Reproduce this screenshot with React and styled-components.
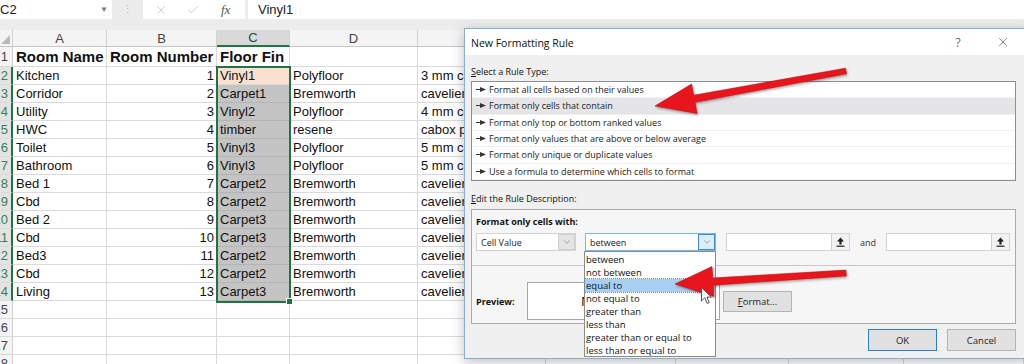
import React from "react";
import styled, { createGlobalStyle } from "styled-components";
import { X, Check, ChevronDown } from "lucide-react";

const GlobalStyle = createGlobalStyle`
  html, body {
    margin: 0;
    padding: 0;
    background: #fff;
    overflow: hidden;
  }
  body {
    font-family: "Liberation Sans", Arial, sans-serif;
    color: #111;
  }
`;

const COLS = "13px 94px 110px 73px 128px 128px 130px 113px 115px 120px";

const Screen = styled.div`
  position: relative;
  width: 1024px;
  height: 364px;
  overflow: hidden;
  background: #fff;
`;

/* ---------- formula bar ---------- */

const TopArea = styled.div`
  background: #ececec;
  padding-bottom: 11px;
`;

const FormulaBar = styled.div`
  display: flex;
  height: 19px;
  font-size: 13px;
`;

const NameBox = styled.div`
  width: 112px;
  background: #fff;
  display: flex;
  align-items: center;
  justify-content: space-between;
  padding: 0 4px 0 0;
  box-sizing: border-box;
  color: #222;
`;

const Caret = styled.span`
  font-size: 8px;
  color: #777;
`;

const Grip = styled.div`
  width: 31px;
  display: flex;
  align-items: center;
  justify-content: center;
  color: #b4b4b4;
  font-size: 11px;
`;

const FxArea = styled.div`
  width: 102px;
  background: #fff;
  display: flex;
  align-items: center;
  padding-left: 11px;
  gap: 18px;
  box-sizing: border-box;
  color: #b8b8b8;
`;

const FxMark = styled.span`
  font-family: "Liberation Serif", serif;
  font-style: italic;
  font-size: 13px;
  color: #555;
  margin-left: 3px;
`;

const FormulaInput = styled.div`
  flex: 1;
  margin-left: 3px;
  background: #fff;
  display: flex;
  align-items: center;
  padding-left: 10px;
  color: #222;
`;

/* ---------- sheet ---------- */

const Row = styled.div`
  display: grid;
  grid-template-columns: ${COLS};
  height: ${(p) => p.$h}px;
`;

const Corner = styled.div`
  position: relative;
  background: #f4f4f4;
  border-right: 1px solid #d0d0d0;
  border-bottom: 1px solid #c6c6c6;
  &::after {
    content: "";
    position: absolute;
    right: 2px;
    bottom: 2px;
    border-left: 9px solid transparent;
    border-bottom: 9px solid #b9b9b9;
  }
`;

const ColHead = styled.div`
  display: flex;
  align-items: center;
  justify-content: center;
  box-sizing: border-box;
  background: ${(p) => (p.$sel ? "#d9d9d9" : "#f4f4f4")};
  border-right: 1px solid #d2d2d2;
  border-bottom: ${(p) => (p.$sel ? "2px solid #217346" : "1px solid #c6c6c6")};
  color: ${(p) => (p.$sel ? "#1e4f33" : "#444")};
  font-size: 13px;
`;

const RowHead = styled.div`
  display: flex;
  align-items: center;
  justify-content: flex-end;
  overflow: hidden;
  box-sizing: border-box;
  padding-right: ${(p) => (p.$sel ? "3px" : "4px")};
  background: ${(p) => (p.$sel ? "#e3e3e3" : "#f4f4f4")};
  color: ${(p) => (p.$sel ? "#3d7d58" : "#444")};
  border-right: ${(p) => (p.$sel ? "2px solid #217346" : "1px solid #d0d0d0")};
  border-bottom: 1px solid #dadada;
  font-size: 13px;
`;

const Cell = styled.div`
  display: flex;
  align-items: center;
  justify-content: ${(p) => (p.$num ? "flex-end" : "flex-start")};
  padding: ${(p) => (p.$num ? "0 2px 0 0" : "0 0 0 3px")};
  box-sizing: border-box;
  border-right: 1px solid ${(p) => (p.$shade ? "#b4b4b4" : "#dadada")};
  border-bottom: 1px solid ${(p) => (p.$shade ? "#b4b4b4" : "#dadada")};
  background: ${(p) => p.$bg || "#fff"};
  white-space: nowrap;
  overflow: hidden;
  font-size: ${(p) => (p.$bold ? "15px" : "13px")};
  font-weight: ${(p) => (p.$bold ? 700 : 400)};
  color: #111;
`;

const Selection = styled.div`
  position: absolute;
  left: 216px;
  top: 66px;
  width: 75px;
  height: 237px;
  box-sizing: border-box;
  border: 2px solid #217346;
  pointer-events: none;
  &::after {
    content: "";
    position: absolute;
    right: -4px;
    bottom: -4px;
    width: 5px;
    height: 5px;
    background: #217346;
    border: 1px solid #fff;
  }
`;

/* ---------- dialog ---------- */

const Dialog = styled.div`
  position: absolute;
  left: 464px;
  top: 28px;
  width: 566px;
  height: 331px;
  box-sizing: border-box;
  background: #f0f0f0;
  border: 1px solid #86add4;
  box-shadow: 0 3px 12px rgba(0, 0, 0, 0.25);
  font-family: "Open Sans", "Liberation Sans", sans-serif;
  font-size: 9px;
  color: #111;
`;

const TitleBar = styled.div`
  display: flex;
  align-items: center;
  height: 26px;
  background: #fff;
  padding: 0 6px;
  font-size: 10.5px;
`;

const TitleText = styled.div`
  flex: 1;
  padding-top: 2px;
`;

const TitleBtn = styled.div`
  width: ${(p) => p.$w}px;
  margin-left: ${(p) => p.$gap || 0}px;
  display: flex;
  justify-content: center;
  color: #666;
  font-size: 12px;
`;

const Body = styled.div`
  padding: 0 0 0 6px;
  display: flex;
  flex-direction: column;
`;

const Label = styled.div`
  height: 14px;
  line-height: 14px;
  margin-top: ${(p) => p.$mt}px;
  font-weight: ${(p) => (p.$bold ? 700 : 400)};
  &::first-letter {
    text-decoration: ${(p) => (p.$key ? "underline" : "none")};
  }
`;

const RuleList = styled.div`
  width: 545px;
  height: 100px;
  margin-top: 2px;
  box-sizing: border-box;
  background: #fff;
  border: 1px solid #8a8f96;
  display: flex;
  flex-direction: column;
`;

const RuleItem = styled.div`
  flex: 1;
  display: flex;
  align-items: center;
  gap: 3px;
  padding-left: 4px;
  background: ${(p) => (p.$sel ? "#e5e5e8" : "#fff")};
  border-bottom: 1px solid #f1f1f1;
  color: #222;
  white-space: nowrap;
`;

const DescBox = styled.div`
  width: 545px;
  height: 115px;
  margin-top: 3px;
  box-sizing: border-box;
  border: 1px solid #a9a9a9;
  background: #f6f6f6;
  display: flex;
  flex-direction: column;
`;

const DescTop = styled.div`
  padding: 5px 0 0 4px;
  height: 56px;
  box-sizing: border-box;
  border-bottom: 1px solid #c8c8c8;
`;

const FieldRow = styled.div`
  display: flex;
  align-items: center;
  margin-top: 4px;
  height: 18px;
`;

const Combo = styled.div`
  width: ${(p) => p.$w}px;
  height: 18px;
  margin-right: ${(p) => p.$mr || 0}px;
  box-sizing: border-box;
  border: 1px solid ${(p) => (p.$open ? "#7eb4ea" : "#d3d3d3")};
  background: #fff;
  display: flex;
  align-items: center;
`;

const ComboText = styled.div`
  flex: 1;
  padding-left: 4px;
  color: #222;
`;

const ComboBtn = styled.div`
  width: 17px;
  height: 100%;
  box-sizing: border-box;
  display: flex;
  align-items: center;
  justify-content: center;
  background: ${(p) => (p.$open ? "#dceefc" : "#e4e4e4")};
  border: 1px solid ${(p) => (p.$open ? "#3c8ad8" : "#cfcfcf")};
  color: #555;
`;

const RefBtn = styled.div`
  width: 18px;
  height: 100%;
  box-sizing: border-box;
  display: flex;
  align-items: center;
  justify-content: center;
  background: #f2f2f2;
  border-left: 1px solid #d0d0d0;
`;

const AndText = styled.div`
  width: 26px;
  margin-left: 10px;
  color: #333;
`;

const PreviewRow = styled.div`
  display: flex;
  align-items: center;
  padding: 16px 0 0 4px;
`;

const PreviewLabel = styled.div`
  width: 51px;
  font-weight: 700;
`;

const PreviewBox = styled.div`
  width: 193px;
  height: 38px;
  box-sizing: border-box;
  background: #fff;
  border: 1px solid #a6a6a6;
  display: flex;
  align-items: center;
  justify-content: center;
  font-family: "Liberation Sans", Arial, sans-serif;
  font-size: 13px;
  color: #111;
`;

const Button = styled.div`
  width: 69px;
  height: ${(p) => p.$h || 22}px;
  margin-left: ${(p) => p.$ml || 0}px;
  box-sizing: border-box;
  display: flex;
  align-items: center;
  justify-content: center;
  background: #e1e1e1;
  border: 1px solid ${(p) => (p.$primary ? "#2a7fd4" : "#b4b4b4")};
  color: #222;
  font-size: 9.5px;
`;

const KeyText = styled.span`
  &::first-letter {
    text-decoration: underline;
  }
`;

const ButtonRow = styled.div`
  display: flex;
  justify-content: flex-end;
  width: 545px;
  margin-top: 5px;
`;

const DropList = styled.div`
  position: absolute;
  left: 119px;
  top: 222px;
  width: 132px;
  height: 106px;
  box-sizing: border-box;
  background: #fff;
  border: 1px solid #8c8c8c;
  display: flex;
  flex-direction: column;
  padding: 1px 0;
`;

const DropItem = styled.div`
  flex: 1;
  display: flex;
  align-items: center;
  padding-left: 1px;
  font-size: 9.5px;
  color: #111;
  white-space: nowrap;
  background: ${(p) => (p.$hot ? "#a8cff1" : "transparent")};
  outline: ${(p) => (p.$hot ? "1px dotted #5a8fc4" : "none")};
`;

const Overlay = styled.svg`
  position: absolute;
  left: 0;
  top: 0;
  pointer-events: none;
`;

const Cursor = styled.svg`
  position: absolute;
  left: 701px;
  top: 287px;
`;

/* ---------- data ---------- */

const rows = [
  ["Kitchen", 1, "Vinyl1", "Polyfloor", "3 mm commercial"],
  ["Corridor", 2, "Carpet1", "Bremworth", "cavelier carpet"],
  ["Utility", 3, "Vinyl2", "Polyfloor", "4 mm commercial"],
  ["HWC", 4, "timber", "resene", "cabox paint"],
  ["Toilet", 5, "Vinyl3", "Polyfloor", "5 mm commercial"],
  ["Bathroom", 6, "Vinyl3", "Polyfloor", "5 mm commercial"],
  ["Bed 1", 7, "Carpet2", "Bremworth", "cavelier carpet"],
  ["Cbd", 8, "Carpet2", "Bremworth", "cavelier carpet"],
  ["Bed 2", 9, "Carpet3", "Bremworth", "cavelier carpet"],
  ["Cbd", 10, "Carpet3", "Bremworth", "cavelier carpet"],
  ["Bed3", 11, "Carpet2", "Bremworth", "cavelier carpet"],
  ["Cbd", 12, "Carpet2", "Bremworth", "cavelier carpet"],
  ["Living", 13, "Carpet3", "Bremworth", "cavelier carpet"],
];

const ruleTypes = [
  "Format all cells based on their values",
  "Format only cells that contain",
  "Format only top or bottom ranked values",
  "Format only values that are above or below average",
  "Format only unique or duplicate values",
  "Use a formula to determine which cells to format",
];

const operators = [
  "between",
  "not between",
  "equal to",
  "not equal to",
  "greater than",
  "less than",
  "greater than or equal to",
  "less than or equal to",
];

const arrowPoints = ([x1, y1], [x2, y2], hl, hw, sw) => {
  const len = Math.hypot(x2 - x1, y2 - y1);
  const ux = (x2 - x1) / len;
  const uy = (y2 - y1) / len;
  const nx = -uy;
  const ny = ux;
  const bx = x2 - ux * hl;
  const by = y2 - uy * hl;
  const pts = [
    [x1 + nx * sw * 0.8, y1 + ny * sw * 0.8],
    [bx + nx * sw, by + ny * sw],
    [bx + nx * hw, by + ny * hw],
    [x2, y2],
    [bx - nx * hw, by - ny * hw],
    [bx - nx * sw, by - ny * sw],
    [x1 - nx * sw * 0.8, y1 - ny * sw * 0.8],
  ];
  return pts.map((q) => q.map((v) => v.toFixed(1)).join(",")).join(" ");
};

const Marker = () => (
  <svg width="10" height="7" viewBox="0 0 10 7">
    <line x1="0" y1="3.5" x2="5" y2="3.5" stroke="#333" strokeWidth="1" />
    <polygon points="4,1 10,3.5 4,6" fill="#333" />
  </svg>
);

const RefIcon = () => (
  <svg width="9" height="10" viewBox="0 0 9 10">
    <polygon points="4.5,0.5 8,4.5 5.6,4.5 5.6,7.5 3.4,7.5 3.4,4.5 1,4.5" fill="#222" />
    <line x1="0.5" y1="9.2" x2="8.5" y2="9.2" stroke="#222" strokeWidth="1.2" />
  </svg>
);

const RefInput = () => (
  <Combo $w={124}>
    <ComboText />
    <RefBtn>
      <RefIcon />
    </RefBtn>
  </Combo>
);

const App = () => {
  const heads = ["A", "B", "C", "D", "E", "", "", "", ""];
  return (
    <Screen>
      <GlobalStyle />
      <TopArea>
        <FormulaBar>
          <NameBox>
            <span>C2</span>
            <Caret>▼</Caret>
          </NameBox>
          <Grip>⋮</Grip>
          <FxArea>
            <X size={14} strokeWidth={1.2} />
            <Check size={14} strokeWidth={1.2} />
            <FxMark>fx</FxMark>
          </FxArea>
          <FormulaInput>Vinyl1</FormulaInput>
        </FormulaBar>
      </TopArea>

      <Row $h={17}>
        <Corner />
        {heads.map((h, i) => (
          <ColHead key={i} $sel={h === "C"}>
            {h}
          </ColHead>
        ))}
      </Row>
      <Row $h={20}>
        <RowHead>1</RowHead>
        <Cell $bold>Room Name</Cell>
        <Cell $bold>Room Number</Cell>
        <Cell $bold>Floor Fin</Cell>
        {[...Array(6)].map((_, i) => (
          <Cell key={i} />
        ))}
      </Row>
      {rows.map((r, i) => (
        <Row $h={18} key={i}>
          <RowHead $sel>{i + 2}</RowHead>
          <Cell>{r[0]}</Cell>
          <Cell $num>{r[1]}</Cell>
          <Cell $shade={i > 0} $bg={i === 0 ? "#fbe0d0" : "#c4c4c4"}>
            {r[2]}
          </Cell>
          <Cell>{r[3]}</Cell>
          <Cell>{r[4]}</Cell>
          {[...Array(4)].map((_, j) => (
            <Cell key={j} />
          ))}
        </Row>
      ))}
      {[15, 16, 17, 18].map((n) => (
        <Row $h={18} key={n}>
          <RowHead>{n}</RowHead>
          {[...Array(9)].map((_, j) => (
            <Cell key={j} />
          ))}
        </Row>
      ))}
      <Selection />

      <Dialog>
        <TitleBar>
          <TitleText>New Formatting Rule</TitleText>
          <TitleBtn $w={30}>?</TitleBtn>
          <TitleBtn $w={40} $gap={10}>
            <X size={14} strokeWidth={1} color="#333" />
          </TitleBtn>
        </TitleBar>
        <Body>
          <Label $mt={10} $key>
            Select a Rule Type:
          </Label>
          <RuleList>
            {ruleTypes.map((t, i) => (
              <RuleItem key={t} $sel={i === 1}>
                <Marker />
                <span>{t}</span>
              </RuleItem>
            ))}
          </RuleList>
          <Label $mt={11} $key>
            Edit the Rule Description:
          </Label>
          <DescBox>
            <DescTop>
              <Label $mt={0} $bold>
                Format only cells with:
              </Label>
              <FieldRow>
                <Combo $w={100} $mr={9}>
                  <ComboText>Cell Value</ComboText>
                  <ComboBtn>
                    <ChevronDown size={10} strokeWidth={1.2} />
                  </ComboBtn>
                </Combo>
                <Combo $w={131} $mr={10} $open>
                  <ComboText>between</ComboText>
                  <ComboBtn $open>
                    <ChevronDown size={10} strokeWidth={1.2} />
                  </ComboBtn>
                </Combo>
                <RefInput />
                <AndText>and</AndText>
                <RefInput />
              </FieldRow>
            </DescTop>
            <PreviewRow>
              <PreviewLabel>Preview:</PreviewLabel>
              <PreviewBox>No Format Set</PreviewBox>
              <Button $h={21} $ml={3}>
                <KeyText>Format...</KeyText>
              </Button>
            </PreviewRow>
          </DescBox>
          <ButtonRow>
            <Button $primary>OK</Button>
            <Button $ml={10}>Cancel</Button>
          </ButtonRow>
        </Body>
        <DropList>
          {operators.map((o) => (
            <DropItem key={o} $hot={o === "equal to"}>
              {o}
            </DropItem>
          ))}
        </DropList>
      </Dialog>

      <Overlay width="1024" height="364" viewBox="0 0 1024 364">
        <defs>
          <filter id="shadow" x="-10%" y="-30%" width="120%" height="160%">
            <feDropShadow dx="1" dy="1.5" stdDeviation="1.2" floodColor="#000" floodOpacity="0.35" />
          </filter>
        </defs>
        <polygon
          points={arrowPoints([846, 71], [655, 106], 40, 15, 3.6)}
          fill="#e8141b"
          stroke="#b50f14"
          strokeWidth="0.6"
          filter="url(#shadow)"
        />
        <polygon
          points={arrowPoints([846, 273], [675, 284], 38, 15, 3.6)}
          fill="#e8141b"
          stroke="#b50f14"
          strokeWidth="0.6"
          filter="url(#shadow)"
        />
      </Overlay>
      <Cursor width="12" height="18" viewBox="0 0 12 18">
        <path
          d="M0.5 0.5 L0.5 14 L3.8 10.8 L6.2 16.5 L8.2 15.6 L5.9 10.1 L10.3 10.1 Z"
          fill="#fff"
          stroke="#555"
          strokeWidth="1"
        />
      </Cursor>
    </Screen>
  );
};

export default App;
